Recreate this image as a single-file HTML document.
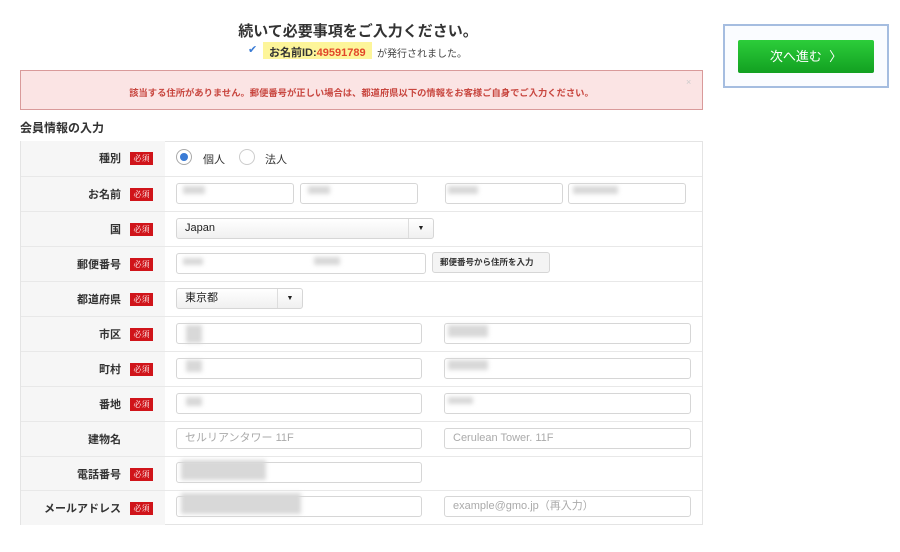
<!DOCTYPE html>
<html><head><meta charset="utf-8"><style>
*{margin:0;padding:0;box-sizing:border-box}
body{width:900px;height:552px;background:#fff;font-family:"Liberation Sans","Noto Sans CJK JP",sans-serif;position:relative;overflow:hidden;color:#333}
.a{position:absolute}
.row{position:absolute;left:21px;width:681px;height:35px;border-top:1px solid #e8e8e8}
.lab{position:absolute;left:0;top:0;width:144px;height:100%;background:#f6f6f6}
.lt{position:absolute;right:44px;top:9px;font-size:11px;font-weight:bold;color:#333;white-space:nowrap}
.req{position:absolute;left:109px;top:11px;width:23px;height:13px;background:#d0141a;color:#fff;font-size:8px;text-align:center;line-height:13px;font-family:"Noto Serif CJK SC",serif}
.in{position:absolute;height:21px;border:1px solid #d6d6d6;border-radius:3px;background:#fff;font-size:11px;color:#aaa;padding-left:8px;line-height:19px;white-space:nowrap}
.bl{position:absolute;background:#d8d8d8;filter:blur(2px)}
.sel{background:linear-gradient(#fff,#f0f0f0);color:#222}
</style></head><body>
<div class="a" style="left:0;width:716px;top:20px;text-align:center;font-size:15px;font-weight:bold;color:#333">続いて必要事項をご入力ください。</div>
<div class="a" style="left:248px;top:43px;font-size:11px;color:#3a7bd5">✔</div>
<div class="a" style="left:263px;top:42px;width:109px;height:17px;background:#fdf59a"></div>
<div class="a" style="left:269px;top:44px;font-size:11px;font-weight:bold;color:#333">お名前ID:<span style="color:#e2472a">49591789</span></div>
<div class="a" style="left:377px;top:45px;font-size:10px;color:#444">が発行されました。</div>
<div class="a" style="left:20px;top:70px;width:683px;height:40px;background:#fbe4e4;border:1px solid #d99a9a"></div>
<div class="a" style="left:20px;top:85px;width:683px;text-align:center;font-size:9.3px;font-weight:bold;color:#c8463f">該当する住所がありません。郵便番号が正しい場合は、都道府県以下の情報をお客様ご自身でご入力ください。</div>
<div class="a" style="left:686px;top:77px;font-size:9px;color:#ccc">×</div>
<div class="a" style="left:723px;top:24px;width:166px;height:64px;border:2px solid #a5bde0;background:#fafcff"></div>
<div class="a" style="left:738px;top:40px;width:136px;height:33px;background:linear-gradient(#2ccd3a,#12a021);border-radius:2px;color:#fff;font-size:13px;text-align:center;line-height:33px">次へ進む &nbsp;〉</div>
<div class="a" style="left:20px;top:119px;font-size:12px;font-weight:bold;color:#333">会員情報の入力</div>
<div class="a" style="left:20px;top:141px;width:683px;height:384px;border:1px solid #e4e4e4"></div>

<div class="row" style="top:141px;border-top:none"><div class="lab"><span class="lt">種別</span><span class="req">必須</span></div>
<div class="a" style="left:155px;top:8px;width:16px;height:16px;border:1px solid #aaa;border-radius:50%;background:#fff"><div style="margin:3px;width:8px;height:8px;border-radius:50%;background:#3a7bd5"></div></div>
<div class="a" style="left:182px;top:10px;font-size:11px">個人</div>
<div class="a" style="left:218px;top:8px;width:16px;height:16px;border:1px solid #ccc;border-radius:50%"></div>
<div class="a" style="left:244px;top:10px;font-size:11px">法人</div></div>

<div class="row" style="top:176px"><div class="lab"><span class="lt">お名前</span><span class="req">必須</span></div>
<div class="in" style="left:155px;top:6px;width:118px"></div><div class="in" style="left:279px;top:6px;width:118px"></div>
<div class="in" style="left:424px;top:6px;width:118px"></div><div class="in" style="left:547px;top:6px;width:118px"></div>
<div class="bl" style="left:162px;top:9px;width:22px;height:8px"></div><div class="bl" style="left:287px;top:9px;width:22px;height:8px"></div>
<div class="bl" style="left:427px;top:9px;width:30px;height:8px"></div><div class="bl" style="left:552px;top:9px;width:45px;height:8px"></div></div>

<div class="row" style="top:211px"><div class="lab"><span class="lt">国</span><span class="req">必須</span></div>
<div class="in sel" style="left:155px;top:6px;width:258px">Japan<span style="position:absolute;right:0;top:0;width:25px;height:19px;border-left:1px solid #ddd;text-align:center;font-size:7px">▼</span></div></div>

<div class="row" style="top:246px"><div class="lab"><span class="lt">郵便番号</span><span class="req">必須</span></div>
<div class="in" style="left:155px;top:6px;width:250px"></div>
<div class="bl" style="left:162px;top:11px;width:20px;height:7px"></div><div class="bl" style="left:293px;top:10px;width:26px;height:8px"></div>
<div class="in sel" style="left:411px;top:5px;width:118px;color:#333;font-size:8.5px;font-weight:bold;padding-left:7px;background:#f4f4f4">郵便番号から住所を入力</div></div>

<div class="row" style="top:281px"><div class="lab"><span class="lt">都道府県</span><span class="req">必須</span></div>
<div class="in sel" style="left:155px;top:6px;width:127px">東京都<span style="position:absolute;right:0;top:0;width:25px;height:19px;border-left:1px solid #ddd;text-align:center;font-size:7px">▼</span></div></div>

<div class="row" style="top:316px"><div class="lab"><span class="lt">市区</span><span class="req">必須</span></div>
<div class="in" style="left:155px;top:6px;width:246px"></div><div class="in" style="left:423px;top:6px;width:247px"></div>
<div class="bl" style="left:165px;top:8px;width:16px;height:18px"></div><div class="bl" style="left:427px;top:8px;width:40px;height:12px"></div></div>

<div class="row" style="top:351px"><div class="lab"><span class="lt">町村</span><span class="req">必須</span></div>
<div class="in" style="left:155px;top:6px;width:246px"></div><div class="in" style="left:423px;top:6px;width:247px"></div>
<div class="bl" style="left:165px;top:8px;width:16px;height:12px"></div><div class="bl" style="left:427px;top:8px;width:40px;height:10px"></div></div>

<div class="row" style="top:386px"><div class="lab"><span class="lt">番地</span><span class="req">必須</span></div>
<div class="in" style="left:155px;top:6px;width:246px"></div><div class="in" style="left:423px;top:6px;width:247px"></div>
<div class="bl" style="left:165px;top:10px;width:16px;height:9px"></div><div class="bl" style="left:427px;top:10px;width:25px;height:7px"></div></div>

<div class="row" style="top:421px"><div class="lab"><span class="lt">建物名</span></div>
<div class="in" style="left:155px;top:6px;width:246px">セルリアンタワー 11F</div><div class="in" style="left:423px;top:6px;width:247px">Cerulean Tower. 11F</div></div>

<div class="row" style="top:456px"><div class="lab"><span class="lt">電話番号</span><span class="req">必須</span></div>
<div class="in" style="left:155px;top:5px;width:246px"></div>
<div class="bl" style="left:160px;top:3px;width:85px;height:20px"></div></div>

<div class="row" style="top:490px"><div class="lab"><span class="lt">メールアドレス</span><span class="req">必須</span></div>
<div class="in" style="left:155px;top:5px;width:246px"></div><div class="in" style="left:423px;top:5px;width:247px">example@gmo.jp（再入力）</div>
<div class="bl" style="left:160px;top:2px;width:120px;height:21px"></div></div>
</body></html>
